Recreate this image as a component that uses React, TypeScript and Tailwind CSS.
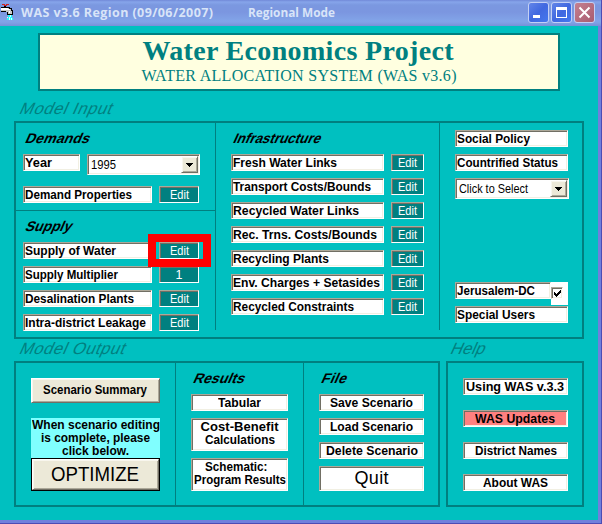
import { useLayoutEffect, useRef, useState, type ReactNode } from "react";

/** Single line of text that spans `w` pixels: tracked out when short, condensed when long. */
function Fit({ w, children, className = "" }: { w: number; children: string; className?: string }) {
  const ref = useRef<HTMLSpanElement>(null);
  const [fit, setFit] = useState({ gap: 0, scale: 1, margin: 0 });
  useLayoutEffect(() => {
    const el = ref.current;
    if (!el || children.length < 2) return;
    el.style.letterSpacing = "0px";
    const natural = parseFloat(getComputedStyle(el).width);
    if (natural > w) {
      setFit({ gap: 0, scale: w / natural, margin: w - natural });
    } else {
      const gap = (w - natural) / (children.length - 1);
      el.style.letterSpacing = `${gap}px`;
      setFit({ gap, scale: 1, margin: -gap });
    }
  }, [w, children]);
  return (
    <span
      ref={ref}
      className={`inline-block shrink-0 origin-left whitespace-pre ${className}`}
      style={{
        letterSpacing: fit.gap,
        marginRight: fit.margin,
        transform: fit.scale === 1 ? undefined : `scaleX(${fit.scale})`,
      }}
    >
      {children}
    </span>
  );
}

const sunken =
  "border border-t-[#aca899] border-l-[#aca899] border-r-white border-b-white shadow-[inset_1px_1px_0_#716f64,inset_-1px_-1px_0_#f1efe2]";
const raised =
  "border border-t-white border-l-white border-r-[#716f64] border-b-[#716f64] bg-[#ece9d8] shadow-[inset_1px_1px_0_#f8f6ee,inset_-1px_-1px_0_#aca899]";

function Field({ label, w, className }: { label: string; w: number; className: string }) {
  return (
    <div className={`flex h-[17px] shrink-0 items-start bg-white pl-px text-[13px] leading-[15px] font-bold ${sunken} ${className}`}>
      <Fit w={w + 1}>{label}</Fit>
    </div>
  );
}

function Edit({ label = "Edit", className }: { label?: string; className: string }) {
  return (
    <button
      className={`flex h-[17px] shrink-0 items-start justify-center border border-t-[#aca899] border-l-[#aca899] border-r-white border-b-white bg-[#008080] text-[12.5px] leading-[16px] text-white shadow-[inset_1px_1px_0_#716f64] ${className}`}
    >
      <Fit w={19}>{label}</Fit>
    </button>
  );
}

function Combo({ label, w, className }: { label: string; w: number; className: string }) {
  return (
    <div className={`flex h-[21px] shrink-0 items-start justify-between bg-white pr-[1px] pl-[3px] text-[12.5px] leading-[20px] ${sunken} ${className}`}>
      <Fit w={w}>{label}</Fit>
      <span className={`mt-px flex h-[17px] w-[17px] items-center justify-center ${raised}`}>
        <svg width="7" height="4" shapeRendering="crispEdges">
          <path d="M0 0h7v1h-1v1h-1v1h-1v1h-1v-1h-1v-1h-1v-1h-1z" />
        </svg>
      </span>
    </div>
  );
}

function Heading({ w, children }: { w: number; children: string }) {
  return (
    <h3 className="h-[16px] text-[14px] leading-[16px] font-bold">
      <span className="inline-block origin-bottom -skew-x-[24deg]">
        <Fit w={w}>{children}</Fit>
      </span>
    </h3>
  );
}

function Caption({ w, children }: { w: number; children: string }) {
  return (
    <h2 className="text-[16.5px] leading-[18px] text-[#008080]">
      <span className="inline-block origin-bottom -skew-x-[24deg]">
        <Fit w={w}>{children}</Fit>
      </span>
    </h2>
  );
}

function Push({ lines, className }: { lines: [string, number][]; className: string }) {
  return (
    <button className={`flex shrink-0 flex-col items-center pt-px text-[13px] leading-[13px] font-bold ${sunken} ${className}`}>
      {lines.map(([t, w]) => (
        <Fit key={t} w={w}>{t}</Fit>
      ))}
    </button>
  );
}

function Faucet() {
  return (
    <svg width="16" height="20" viewBox="0 0 16 20" shapeRendering="crispEdges" className="shrink-0">
      <path d="M2 1h3v1h-3zM6 1h3v1h-3zM4 2h3v1h-3z" fill="#d02020" />
      <path d="M1 4h9v1h2v2h1v5h-6v-3h-6z" fill="#000" />
      <path d="M1 5h8v1h2v2h1v3h-4v-2h-2v-1h-5z" fill="#c8c8c8" />
      <path d="M1 5h7v1h2v1h-9zM9 8h1v2h-1z" fill="#fff" />
      <path d="M4 3h2v2h-2z" fill="#000" />
      <path d="M8 12h2v2h-2zM11 12h1v3h-1zM7 15h2v2h-2zM10 14h1v3h-1zM12 15h1v2h-1z" fill="#20ffff" />
      <path d="M10 12h1v2h-1zM9 14h1v3h-1zM11 15h1v2h-1zM7 14h1v1h-1z" fill="#d8ffff" />
    </svg>
  );
}

function CaptionButton({ red, children }: { red?: boolean; children: ReactNode }) {
  return (
    <button
      className={`flex h-[21px] w-[21px] items-center justify-center rounded-[3px] border border-[#c3d0f5] bg-gradient-to-br ${
        red ? "from-[#c58090] to-[#a85c70]" : "from-[#6385e8] via-[#4068e0] to-[#4478ee]"
      }`}
    >
      <svg width="19" height="19" shapeRendering={red ? "auto" : "crispEdges"}>{children}</svg>
    </button>
  );
}

function TitleBar() {
  return (
    <header className="flex h-[26px] items-start bg-[linear-gradient(#7189d8_0px,#86a5ea_2px,#7b98e0_5px,#7b96e0_12px,#82a4e8_21px,#809fe4_23px,#7590d8_26px)] text-[#d8e4f8]">
      <div className="mt-[3px] w-[21px]">
        <Faucet />
      </div>
      <div className="flex gap-[35px] pt-[3px] font-['Open_Sans','Noto_Sans',sans-serif] text-[12.5px] leading-[20px] font-bold">
        <Fit w={192}>WAS v3.6 Region (09/06/2007)</Fit>
        <Fit w={87}>Regional Mode</Fit>
      </div>
      <div className="mt-[2px] mr-[6px] ml-auto flex gap-[2px]">
        <CaptionButton>
          <path d="M4 12h7v3h-7z" fill="#fff" />
        </CaptionButton>
        <CaptionButton>
          <path d="M4 4h11v11h-11zM5 7v7h9v-7z" fill="#fff" fillRule="evenodd" />
        </CaptionButton>
        <CaptionButton red>
          <path d="M4.5 4.5l10 10M14.5 4.5l-10 10" stroke="#fff" strokeWidth="2" />
        </CaptionButton>
      </div>
    </header>
  );
}

const supply: [string, number, string][] = [
  ["Supply of Water", 90, "Edit"],
  ["Supply Multiplier", 92, "1"],
  ["Desalination Plants", 108, "Edit"],
  ["Intra-district Leakage", 120, "Edit"],
];

const infrastructure: [string, number][] = [
  ["Fresh Water Links", 103],
  ["Transport Costs/Bounds", 137],
  ["Recycled Water Links", 125],
  ["Rec. Trns. Costs/Bounds", 143],
  ["Recycling Plants", 95],
  ["Env. Charges + Setasides", 146],
  ["Recycled Constraints", 120],
];

function ModelInput() {
  return (
    <section className="flex h-[218px] w-[570px] border-2 border-[#008080]">
      <div className="h-[207px] w-[200px] border-r border-[#008080]">
        <div className="h-[88px] border-b border-[#008080] pt-[7px] pl-[7px]">
          <Heading w={64}>Demands</Heading>
          <div className="mt-[8px] flex gap-[7px]">
            <Field label="Year" w={26} className="w-[57px]" />
            <Combo label="1995" w={25} className="w-[113px]" />
          </div>
          <div className="mt-[11px] flex gap-[7px]">
            <Field label="Demand Properties" w={106} className="w-[129px]" />
            <Edit className="w-[40px]" />
          </div>
        </div>
        <div className="pt-[7px] pl-[7px]">
          <Heading w={46}>Supply</Heading>
          <div className="mt-[8px] flex flex-col gap-[7px]">
            {supply.map(([label, w, action], i) => (
              <div key={label} className="relative flex gap-[7px]">
                <Field label={label} w={w} className="w-[129px]" />
                <Edit label={action} className="w-[40px]" />
                {i === 0 && (
                  <div className="absolute -top-[8px] left-[125px] z-10 h-[33px] w-[63px] border-8 border-[#ff0000]" />
                )}
              </div>
            ))}
          </div>
        </div>
      </div>
      <div className="h-[207px] w-[224px] border-r border-[#008080] pt-[7px] pl-[15px]">
        <Heading w={87}>Infrastructure</Heading>
        <div className="mt-[8px] flex flex-col gap-[7px]">
          {infrastructure.map(([label, w]) => (
            <div key={label} className="flex gap-[7px]">
              <Field label={label} w={w} className="w-[153px]" />
              <Edit className="w-[33px]" />
            </div>
          ))}
        </div>
      </div>
      <div className="flex flex-col pt-[7px] pl-[15px]">
        <Field label="Social Policy" w={72} className="w-[113px]" />
        <Field label="Countrified Status" w={100} className="mt-[7px] w-[113px]" />
        <Combo label="Click to Select" w={69} className="mt-[7px] w-[114px]" />
        <div className="mt-[83px] flex h-[24px]">
          <Field label="Jerusalem-DC" w={77} className="w-[96px]" />
          <div className="h-[23px] w-[17px] bg-white pt-[5px]">
            <div className={`flex h-[12px] w-[12px] items-center justify-center bg-white ${sunken}`}>
              <svg width="7" height="7" shapeRendering="crispEdges">
                <path d="M0 2h1v1h1v1h1v-1h1v-1h1v-1h1v-1h1v3h-1v1h-1v1h-1v1h-1v1h-1v-1h-1v-1h-1z" />
              </svg>
            </div>
          </div>
        </div>
        <Field label="Special Users" w={77} className="w-[113px]" />
      </div>
    </section>
  );
}

function ModelOutput() {
  return (
    <section className="flex h-[146px] w-[426px] border-2 border-[#008080]">
      <div className="w-[160px] border-r border-[#008080] pt-[15px] pl-[15px]">
        <button className={`flex h-[25px] w-[129px] items-start justify-center text-[13px] leading-[21px] font-bold ${raised}`}>
          <Fit w={104}>Scenario Summary</Fit>
        </button>
        <div className="mt-[15px] flex h-[40px] w-[129px] flex-col items-center bg-[#80ffff] text-[13px] leading-[13px] font-bold">
          <Fit w={128}>When scenario editing</Fit>
          <Fit w={109}>is complete, please</Fit>
          <Fit w={67}>click below.</Fit>
        </div>
        <div className="h-[33px] w-[129px] bg-black p-px">
          <button className={`flex h-[31px] w-[127px] items-start justify-center text-[20px] leading-[28px] ${raised}`}>
            <Fit w={88}>OPTIMIZE</Fit>
          </button>
        </div>
      </div>
      <div className="w-[128px] border-r border-[#008080] pt-[7px] pl-[15px]">
        <Heading w={51}>Results</Heading>
        <Push lines={[["Tabular", 43]]} className="mt-[8px] h-[17px] w-[97px] bg-white" />
        <Push lines={[["Cost-Benefit", 78], ["Calculations", 70]]} className="mt-[7px] h-[33px] w-[97px] bg-white" />
        <Push lines={[["Schematic:  ", 69], ["Program Results", 92]]} className="mt-[7px] h-[33px] w-[97px] bg-white" />
      </div>
      <div className="pt-[7px] pl-[15px]">
        <Heading w={25}>File</Heading>
        <Push lines={[["Save Scenario", 83]]} className="mt-[8px] h-[17px] w-[105px] bg-white" />
        <Push lines={[["Load Scenario", 83]]} className="mt-[7px] h-[17px] w-[105px] bg-white" />
        <Push lines={[["Delete Scenario", 92]]} className="mt-[7px] h-[17px] w-[105px] bg-white" />
        <button className={`mt-[7px] flex h-[25px] w-[105px] items-start justify-center bg-white text-[18px] leading-[23px] ${sunken}`}>
          <Fit w={34}>Quit</Fit>
        </button>
      </div>
    </section>
  );
}

function Help() {
  return (
    <section className="flex h-[146px] w-[138px] flex-col border-2 border-[#008080] pt-[15px] pl-[15px]">
      <Push lines={[["Using WAS v.3.3", 98]]} className="h-[17px] w-[105px] bg-white" />
      <Push lines={[["WAS Updates", 80]]} className="mt-[15px] h-[17px] w-[105px] bg-[#ff8080]" />
      <Push lines={[["District Names", 82]]} className="mt-[15px] h-[17px] w-[105px] bg-white" />
      <Push lines={[["About WAS", 65]]} className="mt-[15px] h-[17px] w-[105px] bg-white" />
    </section>
  );
}

export default function App() {
  return (
    <div className="h-[524px] w-[602px] overflow-hidden border-r border-b border-[#4c4cb4] bg-[#00c0c0] font-['Liberation_Sans',Arial,sans-serif] text-black">
      <TitleBar />
      <main className="h-[497px] border-r-3 border-b-3 border-[#7080dc] pl-[14px]">
        <div className="h-[7px]" />
        <div className="ml-[24px] flex h-[58px] w-[522px] flex-col items-center border-2 border-[#008080] bg-[#ffffe0] font-['Liberation_Serif','Times_New_Roman',serif] text-[#008080]">
          <h1 className="h-[32px] pr-[2px] text-[28px] leading-[32px] font-bold">
            <Fit w={311}>Water Economics Project</Fit>
          </h1>
          <p className="h-[18px] text-[16px] leading-[18px]">
            <Fit w={315}>WATER ALLOCATION SYSTEM (WAS v3.6)</Fit>
          </p>
        </div>
        <div className="h-[30px] pt-[8px] pl-[3px]">
          <Caption w={92}>Model Input</Caption>
        </div>
        <ModelInput />
        <div className="flex h-[22px] pl-[3px]">
          <div className="w-[431px]">
            <Caption w={105}>Model Output</Caption>
          </div>
          <Caption w={34}>Help</Caption>
        </div>
        <div className="flex gap-[6px]">
          <ModelOutput />
          <Help />
        </div>
      </main>
    </div>
  );
}
